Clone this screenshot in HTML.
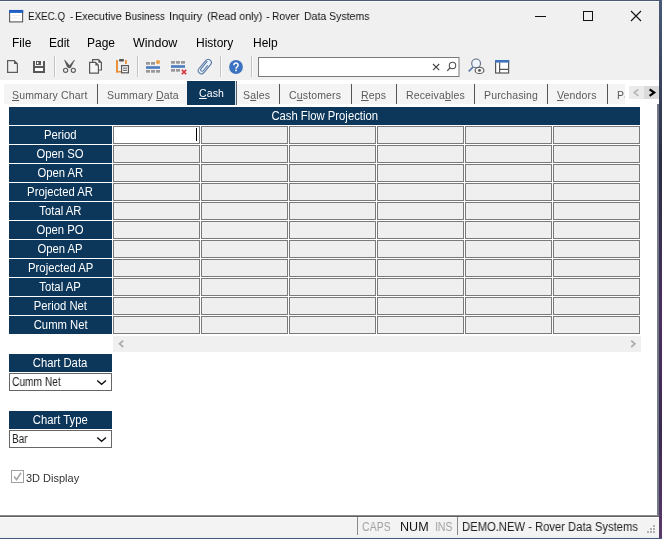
<!DOCTYPE html><html><head><meta charset="utf-8"><style>
*{box-sizing:border-box;margin:0;padding:0}
html,body{width:662px;height:539px;overflow:hidden;background:#2b2e3b}
body{position:relative;font-family:"Liberation Sans",sans-serif;color:#000}
.t,.tabt,.lab{will-change:transform}
div,svg{position:absolute}
.t{white-space:nowrap;line-height:1}
.m{font-size:12px;color:#000;top:37px}
.tab{top:84px;height:20px;background:#f4f4f4}
.tabt{top:90px;font-size:10.5px;color:#5a5a5a;white-space:nowrap;line-height:1;letter-spacing:0.15px}
.sep{top:84px;width:1px;height:20px;background:#555}
.u{text-decoration:underline}
.lab{left:9px;width:103px;height:18px;background:#0c375b;color:#fff;font-size:12px;text-align:center;line-height:18px;white-space:nowrap}
.lt{display:inline-block;transform:scaleX(0.94)}
.cell{width:87px;height:18px;border:1px solid #7a7a7a;background:#efefef}
.tsep{top:56px;width:1px;height:21px;background:#c8c8c8}
</style></head><body>
<div style="left:0;top:0;width:662px;height:1px;background:#4a5870"></div>
<div style="left:659px;top:0;width:3px;height:539px;background:linear-gradient(#4a5a78,#2a2e44 30%,#4a3060 60%,#3a2a50 80%,#5a3a6a)"></div>
<div style="left:0;top:538px;width:662px;height:1px;background:#4d5a84"></div>
<div style="left:0;top:1px;width:659px;height:537px;background:#f0f0f0"></div>
<div style="left:0;top:1px;width:659px;height:1px;background:#f8fbfe"></div>
<svg style="left:8px;top:9px" width="16" height="14" viewBox="0 0 16 14">
<rect x="1.6" y="1.5" width="13" height="11.4" fill="#fff" stroke="#5a5a5a" stroke-width="1.1"/>
<rect x="1" y="1" width="14.2" height="2.9" fill="#1d5fc4"/>
<path d="M3.5 6.5H12.5M3.5 9H12.5" stroke="#e8e8e8" stroke-width="0.8"/></svg>
<div class="t" style="left:28.2px;top:11px;font-size:11.5px;color:#111;transform-origin:0 0;transform:scaleX(0.852)">EXEC.Q</div>
<div class="t" style="left:70.3px;top:11px;font-size:11.5px;color:#111;transform-origin:0 0;transform:scaleX(0.87)">-</div>
<div class="t" style="left:74.9px;top:11px;font-size:11.5px;color:#111;transform-origin:0 0;transform:scaleX(0.937)">Executive</div>
<div class="t" style="left:125.3px;top:11px;font-size:11.5px;color:#111;transform-origin:0 0;transform:scaleX(0.852)">Business</div>
<div class="t" style="left:169.1px;top:11px;font-size:11.5px;color:#111;transform-origin:0 0;transform:scaleX(0.96)">Inquiry</div>
<div class="t" style="left:207.1px;top:11px;font-size:11.5px;color:#111;transform-origin:0 0;transform:scaleX(0.933)">(Read only)</div>
<div class="t" style="left:266.2px;top:11px;font-size:11.5px;color:#111;transform-origin:0 0;transform:scaleX(0.9)">-</div>
<div class="t" style="left:271.8px;top:11px;font-size:11.5px;color:#111;transform-origin:0 0;transform:scaleX(0.893)">Rover</div>
<div class="t" style="left:303.6px;top:11px;font-size:11.5px;color:#111;transform-origin:0 0;transform:scaleX(0.913)">Data</div>
<div class="t" style="left:329.1px;top:11px;font-size:11.5px;color:#111;transform-origin:0 0;transform:scaleX(0.92)">Systems</div>
<div style="left:535px;top:16px;width:11px;height:1px;background:#111"></div>
<div style="left:583px;top:11px;width:10px;height:10px;border:1px solid #111"></div>
<svg style="left:630px;top:10px" width="12" height="12" viewBox="0 0 12 12"><path d="M1 1L11 11M11 1L1 11" stroke="#111" stroke-width="1.1"/></svg>
<div class="t m" style="left:12px">File</div>
<div class="t m" style="left:49px">Edit</div>
<div class="t m" style="left:87px">Page</div>
<div class="t m" style="left:133px;transform-origin:0 0;transform:scaleX(1.04)">Window</div>
<div class="t m" style="left:196px">History</div>
<div class="t m" style="left:253px">Help</div>
<svg style="left:0;top:52px" width="520" height="28" viewBox="0 52 520 28">
<g fill="none" stroke="#5c5c5c" stroke-width="1.2">
<path d="M7.6 60.6H14.2L17.4 63.8V72.4H7.6Z"/>
</g>
<path d="M14 60.2L17.8 64H14Z" fill="#5c5c5c"/>
<rect x="33" y="61" width="12" height="12" fill="#585858"/>
<rect x="35" y="61" width="8" height="5" fill="#f0f0f0"/>
<rect x="36" y="61" width="5" height="4" fill="#585858"/>
<rect x="37" y="62" width="1.4" height="2" fill="#fff"/>
<rect x="35" y="68" width="8" height="3" fill="#fff"/>
<rect x="54" y="56" width="1" height="21" fill="#c4c4c4"/>
<rect x="55" y="56" width="1" height="21" fill="#fbfbfb"/>
<g fill="#5a5a5a">
<path d="M64.1 59.8L65.1 59.9L71.3 67.2L69.3 68.2L67 67Z"/>
<path d="M74.9 60.1L74 60.1L67.8 67.2L69.6 68.2L71.2 67Z"/>
</g>
<g fill="none" stroke="#5a5a5a" stroke-width="1.1">
<circle cx="65.6" cy="70.3" r="2.1"/>
<circle cx="73.3" cy="70.3" r="2.1"/>
</g>
<g stroke="#585858" stroke-width="1.2" stroke-linejoin="miter">
<path d="M92.6 62V59.6H98.6L101.4 62.4V70H98.6" fill="#fafafa"/>
<path d="M89.6 62.4H95.6L98.4 65.2V73.2H89.6Z" fill="#f6f6f6"/>
</g>
<path d="M98.4 59.4L101.8 62.8H98.4Z" fill="#585858"/>
<path d="M95.4 62.2L98.8 65.6H95.4Z" fill="#585858"/>
<g fill="#e8913a">
<rect x="116" y="60" width="2" height="12.5"/>
<rect x="116" y="71" width="5" height="1.5"/>
<rect x="125" y="60" width="1.8" height="4"/>
</g>
<rect x="119" y="59" width="5" height="2.4" rx="1" fill="#555"/>
<rect x="121.6" y="65.6" width="6.8" height="7.2" fill="#fff" stroke="#555" stroke-width="1.2"/>
<rect x="123" y="67.6" width="4" height="1" fill="#555"/>
<rect x="123" y="69.8" width="4" height="1" fill="#555"/>
<rect x="137" y="56" width="1" height="21" fill="#c4c4c4"/>
<rect x="138" y="56" width="1" height="21" fill="#fbfbfb"/>
<g fill="#999999">
<rect x="146" y="62" width="4" height="2.7"/><rect x="151" y="62" width="4" height="2.7"/>
<rect x="146" y="70" width="4" height="2.7"/><rect x="151" y="70" width="4" height="2.7"/><rect x="156" y="70" width="4" height="2.7"/>
<rect x="171" y="61" width="4" height="2.7"/><rect x="176" y="61" width="4" height="2.7"/><rect x="181" y="61" width="4" height="2.7"/>
<rect x="171" y="69" width="4" height="2.7"/><rect x="176" y="69" width="4" height="2.7"/>
</g>
<circle cx="158" cy="62.1" r="2.1" fill="#e9a048"/>
<rect x="146" y="66.2" width="14" height="2.6" fill="#4a7cc0"/>
<rect x="171" y="65.2" width="14" height="2.6" fill="#4a7cc0"/>
<path d="M181.8 69.8L186.2 74.2M186.2 69.8L181.8 74.2" stroke="#d62a3a" stroke-width="1.6"/>
<g transform="rotate(-50 204.8 66.6)">
<rect x="196.4" y="63.4" width="16.8" height="6.4" rx="3.2" fill="#e6f2fd" stroke="#55739f" stroke-width="1.05"/>
<path d="M210.6 65.1H200.6A1.5 1.5 0 0 0 200.6 68.1H207.6" fill="none" stroke="#55739f" stroke-width="1"/>
</g>
<rect x="220" y="56" width="1" height="21" fill="#c4c4c4"/>
<rect x="221" y="56" width="1" height="21" fill="#fbfbfb"/>
<circle cx="236" cy="67" r="6.9" fill="#3d72c2"/>
<path d="M233.9 65.2A2.1 2.1 0 1 1 237.4 66.6C236.4 67.3 236 67.6 236 68.8" fill="none" stroke="#fff" stroke-width="1.5"/>
<rect x="235.2" y="69.6" width="1.6" height="1.6" fill="#fff"/>
<rect x="251" y="56" width="1" height="21" fill="#c4c4c4"/>
<rect x="252" y="56" width="1" height="21" fill="#fbfbfb"/>
<rect x="258.5" y="57.5" width="200.5" height="19" fill="#fff" stroke="#7a7a7a" stroke-width="1"/>
<path d="M433 64L439.2 70.2M439.2 64L433 70.2" stroke="#444" stroke-width="1.1"/>
<circle cx="452.5" cy="65.4" r="3.2" fill="none" stroke="#555" stroke-width="1.1"/>
<path d="M450.2 67.8L447.2 70.9" stroke="#555" stroke-width="1.3"/>
<circle cx="476.1" cy="63.4" r="4.4" fill="#eef5fc" stroke="#5f6f84" stroke-width="1.1"/>
<path d="M473.1 67L468.7 71.3" stroke="#5a7aa5" stroke-width="1.7"/>
<ellipse cx="479.5" cy="70.4" rx="4.4" ry="3.1" fill="#f4f4f4" stroke="#555" stroke-width="1.1"/>
<circle cx="479.5" cy="70.4" r="1.4" fill="#555"/>
<rect x="495.6" y="60.6" width="13" height="12.4" fill="#fff" stroke="#555" stroke-width="1.2"/>
<rect x="495" y="60" width="14.2" height="2.6" fill="#3c72be"/>
<path d="M499.6 62.5V73M499.6 69.4H508.6" stroke="#555" stroke-width="1.2"/>
</svg>
<div style="left:0;top:80px;width:659px;height:435px;background:#fff"></div>
<div style="left:657px;top:104px;width:2px;height:411px;background:#737886"></div>
<div class="tab" style="left:4px;width:93px"></div>
<div class="tab" style="left:98px;width:89px"></div>
<div class="tab" style="left:237px;width:42px"></div>
<div class="tab" style="left:280px;width:71px"></div>
<div class="tab" style="left:352px;width:44px"></div>
<div class="tab" style="left:397px;width:77px"></div>
<div class="tab" style="left:475px;width:72px"></div>
<div class="tab" style="left:548px;width:59px"></div>
<div class="tab" style="left:608px;width:17px"></div>
<div style="left:236px;top:81px;width:1px;height:24px;background:#5a6470"></div>
<div style="left:235px;top:81px;width:1px;height:24px;background:#d8e4ee"></div>
<div class="sep" style="left:97px"></div>
<div class="sep" style="left:279px"></div>
<div class="sep" style="left:351px"></div>
<div class="sep" style="left:396px"></div>
<div class="sep" style="left:474px"></div>
<div class="sep" style="left:547px"></div>
<div class="sep" style="left:607px"></div>
<div style="left:187px;top:81px;width:48px;height:24px;background:#0c375b"></div>
<div class="tabt" style="left:12px;"><span class="u">S</span>ummary Chart</div>
<div class="tabt" style="left:107px;">Summary <span class="u">D</span>ata</div>
<div class="tabt" style="left:198.5px;top:88px;color:#fff;"><span class="u">C</span>ash</div>
<div class="tabt" style="left:243px;">S<span class="u">a</span>les</div>
<div class="tabt" style="left:289px;">C<span class="u">u</span>stomers</div>
<div class="tabt" style="left:361px;"><span class="u">R</span>eps</div>
<div class="tabt" style="left:406px;">Receiva<span class="u">b</span>les</div>
<div class="tabt" style="left:484px;">Purchasin<span class="u">g</span></div>
<div class="tabt" style="left:557px;"><span class="u">V</span>endors</div>
<div class="tabt" style="left:617px;width:8px;overflow:hidden;">Pa</div>
<div style="left:629px;top:86px;width:15px;height:13px;background:#ebebeb"></div>
<div style="left:644px;top:86px;width:15px;height:13px;background:#dadada"></div>
<svg style="left:629px;top:86px" width="30" height="13" viewBox="629 86 30 13"><path d="M638.4 89.3L634.2 92.6L638.4 95.9" fill="none" stroke="#b4b4b4" stroke-width="1.6"/><path d="M649.6 89.3L654.2 92.6L649.6 95.9" fill="none" stroke="#000" stroke-width="2.2"/></svg>
<div class="lab" style="top:107px;width:631px"><span class="lt">Cash Flow Projection</span></div>
<div class="lab" style="top:126px"><span class="lt">Period</span></div>
<div class="cell" style="left:113px;top:126px;background:#fff"></div>
<div class="cell" style="left:201px;top:126px;background:#efefef"></div>
<div class="cell" style="left:289px;top:126px;background:#efefef"></div>
<div class="cell" style="left:377px;top:126px;background:#efefef"></div>
<div class="cell" style="left:465px;top:126px;background:#efefef"></div>
<div class="cell" style="left:553px;top:126px;background:#efefef"></div>
<div class="lab" style="top:145px"><span class="lt">Open SO</span></div>
<div class="cell" style="left:113px;top:145px;background:#efefef"></div>
<div class="cell" style="left:201px;top:145px;background:#efefef"></div>
<div class="cell" style="left:289px;top:145px;background:#efefef"></div>
<div class="cell" style="left:377px;top:145px;background:#efefef"></div>
<div class="cell" style="left:465px;top:145px;background:#efefef"></div>
<div class="cell" style="left:553px;top:145px;background:#efefef"></div>
<div class="lab" style="top:164px"><span class="lt">Open AR</span></div>
<div class="cell" style="left:113px;top:164px;background:#efefef"></div>
<div class="cell" style="left:201px;top:164px;background:#efefef"></div>
<div class="cell" style="left:289px;top:164px;background:#efefef"></div>
<div class="cell" style="left:377px;top:164px;background:#efefef"></div>
<div class="cell" style="left:465px;top:164px;background:#efefef"></div>
<div class="cell" style="left:553px;top:164px;background:#efefef"></div>
<div class="lab" style="top:183px"><span class="lt">Projected AR</span></div>
<div class="cell" style="left:113px;top:183px;background:#efefef"></div>
<div class="cell" style="left:201px;top:183px;background:#efefef"></div>
<div class="cell" style="left:289px;top:183px;background:#efefef"></div>
<div class="cell" style="left:377px;top:183px;background:#efefef"></div>
<div class="cell" style="left:465px;top:183px;background:#efefef"></div>
<div class="cell" style="left:553px;top:183px;background:#efefef"></div>
<div class="lab" style="top:202px"><span class="lt">Total AR</span></div>
<div class="cell" style="left:113px;top:202px;background:#efefef"></div>
<div class="cell" style="left:201px;top:202px;background:#efefef"></div>
<div class="cell" style="left:289px;top:202px;background:#efefef"></div>
<div class="cell" style="left:377px;top:202px;background:#efefef"></div>
<div class="cell" style="left:465px;top:202px;background:#efefef"></div>
<div class="cell" style="left:553px;top:202px;background:#efefef"></div>
<div class="lab" style="top:221px"><span class="lt">Open PO</span></div>
<div class="cell" style="left:113px;top:221px;background:#efefef"></div>
<div class="cell" style="left:201px;top:221px;background:#efefef"></div>
<div class="cell" style="left:289px;top:221px;background:#efefef"></div>
<div class="cell" style="left:377px;top:221px;background:#efefef"></div>
<div class="cell" style="left:465px;top:221px;background:#efefef"></div>
<div class="cell" style="left:553px;top:221px;background:#efefef"></div>
<div class="lab" style="top:240px"><span class="lt">Open AP</span></div>
<div class="cell" style="left:113px;top:240px;background:#efefef"></div>
<div class="cell" style="left:201px;top:240px;background:#efefef"></div>
<div class="cell" style="left:289px;top:240px;background:#efefef"></div>
<div class="cell" style="left:377px;top:240px;background:#efefef"></div>
<div class="cell" style="left:465px;top:240px;background:#efefef"></div>
<div class="cell" style="left:553px;top:240px;background:#efefef"></div>
<div class="lab" style="top:259px"><span class="lt">Projected AP</span></div>
<div class="cell" style="left:113px;top:259px;background:#efefef"></div>
<div class="cell" style="left:201px;top:259px;background:#efefef"></div>
<div class="cell" style="left:289px;top:259px;background:#efefef"></div>
<div class="cell" style="left:377px;top:259px;background:#efefef"></div>
<div class="cell" style="left:465px;top:259px;background:#efefef"></div>
<div class="cell" style="left:553px;top:259px;background:#efefef"></div>
<div class="lab" style="top:278px"><span class="lt">Total AP</span></div>
<div class="cell" style="left:113px;top:278px;background:#efefef"></div>
<div class="cell" style="left:201px;top:278px;background:#efefef"></div>
<div class="cell" style="left:289px;top:278px;background:#efefef"></div>
<div class="cell" style="left:377px;top:278px;background:#efefef"></div>
<div class="cell" style="left:465px;top:278px;background:#efefef"></div>
<div class="cell" style="left:553px;top:278px;background:#efefef"></div>
<div class="lab" style="top:297px"><span class="lt">Period Net</span></div>
<div class="cell" style="left:113px;top:297px;background:#efefef"></div>
<div class="cell" style="left:201px;top:297px;background:#efefef"></div>
<div class="cell" style="left:289px;top:297px;background:#efefef"></div>
<div class="cell" style="left:377px;top:297px;background:#efefef"></div>
<div class="cell" style="left:465px;top:297px;background:#efefef"></div>
<div class="cell" style="left:553px;top:297px;background:#efefef"></div>
<div class="lab" style="top:316px"><span class="lt">Cumm Net</span></div>
<div class="cell" style="left:113px;top:316px;background:#efefef"></div>
<div class="cell" style="left:201px;top:316px;background:#efefef"></div>
<div class="cell" style="left:289px;top:316px;background:#efefef"></div>
<div class="cell" style="left:377px;top:316px;background:#efefef"></div>
<div class="cell" style="left:465px;top:316px;background:#efefef"></div>
<div class="cell" style="left:553px;top:316px;background:#efefef"></div>
<div style="left:196px;top:128px;width:1px;height:13px;background:#000"></div>
<div style="left:113px;top:336px;width:528px;height:16px;background:#f0f0f0"></div>
<svg style="left:113px;top:336px" width="528" height="16" viewBox="113 336 528 16"><path d="M123.2 340.6L119.6 343.8L123.2 347" fill="none" stroke="#acacac" stroke-width="1.8"/><path d="M631.2 340.6L634.8 343.8L631.2 347" fill="none" stroke="#acacac" stroke-width="1.8"/></svg>
<div class="lab" style="top:354px"><span class="lt">Chart Data</span></div>
<div style="left:9px;top:373px;width:103px;height:18px;border:1px solid #666;background:#fff"></div>
<div class="t" style="left:11.6px;top:376px;font-size:12px;color:#222;transform-origin:0 0;transform:scaleX(0.85)">Cumm Net</div>
<svg style="left:96px;top:378px" width="12" height="8" viewBox="0 0 12 8"><path d="M1.2 2.4L5.6 6.3L10 2.4" fill="none" stroke="#111" stroke-width="1.4"/></svg>
<div class="lab" style="top:411px"><span class="lt">Chart Type</span></div>
<div style="left:9px;top:430px;width:103px;height:18px;border:1px solid #666;background:#fff"></div>
<div class="t" style="left:12px;top:432.5px;font-size:12px;color:#222;transform-origin:0 0;transform:scaleX(0.83)">Bar</div>
<svg style="left:96px;top:435px" width="12" height="8" viewBox="0 0 12 8"><path d="M1.2 2.4L5.6 6.3L10 2.4" fill="none" stroke="#111" stroke-width="1.4"/></svg>
<div style="left:11px;top:470px;width:13px;height:13px;border:1px solid #a0a0a0;background:#fff"></div>
<svg style="left:11px;top:470px" width="13" height="13" viewBox="11 470 13 13"><path d="M14 476.6L16.6 479.6L21 472.8" fill="none" stroke="#a6a6a6" stroke-width="1.6"/></svg>
<div class="t" style="left:26px;top:473px;font-size:11px;color:#333">3D Display</div>
<div style="left:0;top:515px;width:659px;height:1px;background:#8c8c8c"></div>
<div style="left:0;top:516px;width:659px;height:1px;background:#606060"></div>
<div style="left:0;top:517px;width:659px;height:20px;background:#f3f3f3"></div>
<div style="left:0;top:517px;width:659px;height:1px;background:#fbfbfb"></div>
<div style="left:0;top:537px;width:659px;height:1px;background:#e8eef8"></div>
<div style="left:357px;top:517px;width:1px;height:18px;background:#8a8a8a"></div>
<div style="left:457px;top:517px;width:1px;height:18px;background:#8a8a8a"></div>
<div class="t" style="left:362px;top:521px;font-size:12px;color:#a0a0a0;transform-origin:0 0;transform:scaleX(0.875)">CAPS</div>
<div class="t" style="left:399.5px;top:521px;font-size:12px;color:#111;transform-origin:0 0;transform:scaleX(1.046)">NUM</div>
<div class="t" style="left:435px;top:521px;font-size:12px;color:#a0a0a0;transform-origin:0 0;transform:scaleX(0.87)">INS</div>
<div class="t" style="left:462px;top:521px;font-size:12px;color:#222;transform-origin:0 0;transform:scaleX(0.936)">DEMO.NEW - Rover Data Systems</div>
<svg style="left:644px;top:522px" width="14" height="14" viewBox="0 0 14 14"><g fill="#b0b0b0"><rect x="9" y="3" width="2" height="2"/><rect x="6" y="6" width="2" height="2"/><rect x="9" y="6" width="2" height="2"/><rect x="3" y="9" width="2" height="2"/><rect x="6" y="9" width="2" height="2"/><rect x="9" y="9" width="2" height="2"/></g></svg>
</body></html>
